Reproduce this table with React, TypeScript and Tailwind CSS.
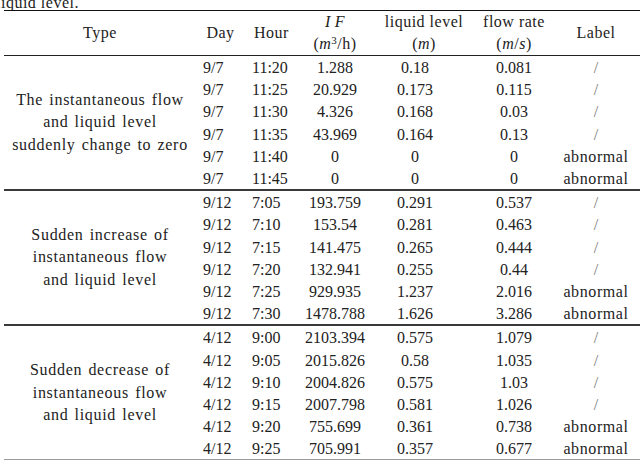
const cols = 'grid grid-cols-[192px_49px_53px_74px_96px_92px_80px]'

type Row = [string, string, string, string, string, string]

interface Group {
  type: string[]
  rows: Row[]
}

const groups: Group[] = [
  {
    type: ['The instantaneous flow', 'and liquid level', 'suddenly change to zero'],
    rows: [
      ['9/7', '11:20', '1.288', '0.18', '0.081', '/'],
      ['9/7', '11:25', '20.929', '0.173', '0.115', '/'],
      ['9/7', '11:30', '4.326', '0.168', '0.03', '/'],
      ['9/7', '11:35', '43.969', '0.164', '0.13', '/'],
      ['9/7', '11:40', '0', '0', '0', 'abnormal'],
      ['9/7', '11:45', '0', '0', '0', 'abnormal'],
    ],
  },
  {
    type: ['Sudden increase of', 'instantaneous flow', 'and liquid level'],
    rows: [
      ['9/12', '7:05', '193.759', '0.291', '0.537', '/'],
      ['9/12', '7:10', '153.54', '0.281', '0.463', '/'],
      ['9/12', '7:15', '141.475', '0.265', '0.444', '/'],
      ['9/12', '7:20', '132.941', '0.255', '0.44', '/'],
      ['9/12', '7:25', '929.935', '1.237', '2.016', 'abnormal'],
      ['9/12', '7:30', '1478.788', '1.626', '3.286', 'abnormal'],
    ],
  },
  {
    type: ['Sudden decrease of', 'instantaneous flow', 'and liquid level'],
    rows: [
      ['4/12', '9:00', '2103.394', '0.575', '1.079', '/'],
      ['4/12', '9:05', '2015.826', '0.58', '1.035', '/'],
      ['4/12', '9:10', '2004.826', '0.575', '1.03', '/'],
      ['4/12', '9:15', '2007.798', '0.581', '1.026', '/'],
      ['4/12', '9:20', '755.699', '0.361', '0.738', 'abnormal'],
      ['4/12', '9:25', '705.991', '0.357', '0.677', 'abnormal'],
    ],
  },
]

function GroupRows({ group, last }: { group: Group; last: boolean }) {
  return (
    <div className={`${cols} ${last ? 'border-b border-[#9a9a9a]' : 'border-b-2 border-[#3a3a3a]'}`}>
      <div className="row-span-6 flex flex-col items-center justify-center text-center leading-[22.5px] tracking-[0.7px] [word-spacing:1.5px]">
        {group.type.map(line => (
          <span key={line}>{line}</span>
        ))}
      </div>
      {group.rows.map((r, i) => (
        <div key={i} className="contents">
          <div className="h-[22.2px] pt-[2px] flex items-center pl-[7px]">{r[0]}</div>
          <div className="h-[22.2px] pt-[2px] flex items-center pl-[7px]">{r[1]}</div>
          <div className="h-[22.2px] pt-[2px] flex items-center justify-center">{r[2]}</div>
          <div className="h-[22.2px] pt-[2px] flex items-center justify-center pr-[10px]">{r[3]}</div>
          <div className="h-[22.2px] pt-[2px] flex items-center justify-center">{r[4]}</div>
          <div className="h-[22.2px] pt-[2px] flex items-center justify-center pr-[8px]">
            {r[5] === '/' ? <span className="text-[#7a7a7a]">/</span> : <span className="tracking-[0.6px]">{r[5]}</span>}
          </div>
        </div>
      ))}
    </div>
  )
}

export default function App() {
  return (
    <div className="w-[640px] h-[462px] overflow-hidden bg-white text-[#222] text-[16px] [font-family:'Liberation_Serif','Times_New_Roman',serif]">
      {/* caption, cut off at the top */}
      <div className="h-[10px] overflow-hidden">
        <div className="mt-[-5px] ml-[-4px] whitespace-nowrap leading-[16px] tracking-[0.5px]">liquid level.</div>
      </div>

      <div className="ml-[4px] w-[636px] border-t-[1.5px] border-[#111]">
        {/* header */}
        <div className={`${cols} h-[45px] border-b-[1.5px] border-[#222] leading-[22px] tracking-[0.5px]`}>
          <div className="flex items-center justify-center">Type</div>
          <div className="flex items-center justify-center">Day</div>
          <div className="flex items-center justify-center">Hour</div>
          <div className="flex flex-col items-center justify-center">
            <span className="italic">I&thinsp;F</span>
            <span>
              (<i>m</i>
              <sup className="text-[11px]">3</sup>/h)
            </span>
          </div>
          <div className="flex flex-col items-center justify-center pl-[8px]">
            <span>liquid level</span>
            <span>
              (<i>m</i>)
            </span>
          </div>
          <div className="flex flex-col items-center justify-center">
            <span>flow rate</span>
            <span>
              (<i>m</i>/<i>s</i>)
            </span>
          </div>
          <div className="flex items-center justify-center pr-[8px]">Label</div>
        </div>

        {groups.map((g, i) => (
          <GroupRows key={i} group={g} last={i === groups.length - 1} />
        ))}
      </div>
    </div>
  )
}
